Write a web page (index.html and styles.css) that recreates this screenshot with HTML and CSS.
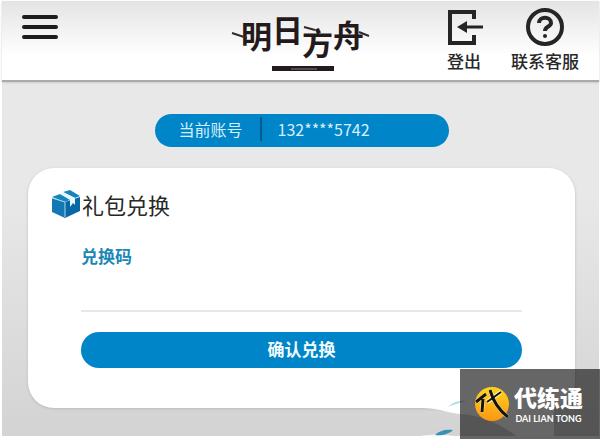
FILE: index.html
```html
<!DOCTYPE html>
<html lang="zh-CN">
<head>
<meta charset="utf-8">
<meta name="viewport" content="width=device-width, initial-scale=1">
<title>礼包兑换</title>
<link rel="stylesheet" href="styles.css">
</head>
<body>
<div class="page">
  <header class="topbar">
    <button class="menu" type="button" aria-label="菜单">
      <svg width="36" height="28" viewBox="0 0 36 28"><path d="M2 4H34M2 14H34M2 24H34" stroke="#1d1d1d" stroke-width="4" stroke-linecap="round"/></svg>
    </button>
    <a class="logo" href="#">
      <svg width="140" height="66" viewBox="0 0 140 66">
        <g class="logo-text">
          <text x="10" y="41">明</text>
          <text x="41" y="35">日</text>
          <text x="71" y="48">方</text>
          <text x="102" y="40">舟</text>
        </g>
        <path d="M1 26L16 31M73 20L84 23M128 25L138 29" stroke="#33292a" stroke-width="2"/>
        <path d="M41 59H103V64H41Z" fill="#241a1b"/>
        <path d="M60 62H86" stroke="#85797a"/>
      </svg>
    </a>
    <nav class="actions">
      <a class="action" href="#">
        <svg width="38" height="38" viewBox="0 0 38 38" fill="none" stroke="#252525"><path d="M29 12V5H5V36H29V28" stroke-width="4"/><path d="M18 20H38" stroke-width="3"/><path d="M12 20L22 14V26Z" fill="#252525" stroke="none"/></svg>
        <span>登出</span>
      </a>
      <a class="action" href="#">
        <svg width="38" height="38" viewBox="0 0 38 38" fill="none" stroke="#252525"><circle cx="19" cy="20" r="17" stroke-width="4"/><path d="M13 16C13 9 25 9 25 16C25 20 19 19 19 24" stroke-width="4"/><circle cx="19" cy="29" r="2" fill="#252525" stroke="none"/></svg>
        <span>联系客服</span>
      </a>
    </nav>
  </header>
  <main class="content">
    <div class="account"><span class="account-label">当前账号</span><span>132****5742</span></div>
    <form class="card">
      <h1 class="title">
        <svg width="28" height="28" viewBox="0 0 28 28"><path d="M0 8L13 12V28L0 22Z" fill="#1478b5"/><path d="M13 12L28 7V21L13 28Z" fill="#0868a5"/><path d="M0 7L8 4L20 9L13 12ZM11 2L18 0L28 6L23 8Z" fill="#1683bd"/><path d="M8 4L11 2L23 8V15L21 13L18 17V10Z" fill="#e7f6fc"/><path d="M0 8L13 12V27" fill="none" stroke="#a7d8ed"/></svg>
        <span>礼包兑换</span>
      </h1>
      <div class="field">
        <label for="code">兑换码</label>
        <input id="code" type="text">
      </div>
      <button class="submit" type="submit">确认兑换</button>
    </form>
  </main>
</div>
<svg class="scenery" width="180" height="40" viewBox="0 0 180 40" aria-hidden="true"><path d="M0 4H134V40H100C80 24 60 16 40 15C28 14 20 9 0 9Z" fill="#fff"/><path d="M0 37C12 35 22 35 34 37H0Z" fill="#f4f5f6"/><path d="M28 8C33 3 39 1 46 2C40 4 35 5 28 8Z" fill="#b5dce8"/><path d="M15 36C19 32 25 30 33 31C29 35 22 37 15 36Z" fill="#3492b4"/></svg>
<aside class="watermark">
  <svg width="36" height="36" viewBox="0 0 36 36"><defs><linearGradient id="sun" x2="0" y2="1"><stop stop-color="#ffd51d"/><stop offset="1" stop-color="#fb9613"/></linearGradient></defs><circle cx="18" cy="18" r="17" fill="url(#sun)"/><path d="M2 16L12 8M9 13L8 26M13 16L27 6M16 4C19 15 26 25 34 31" fill="none" stroke="#fff0b0" stroke-width="4"/><path d="M2 16L12 8M9 13L8 26M16 4C19 15 26 25 34 31" fill="none" stroke="#17140c" stroke-width="3"/><path d="M13 16L27 6" stroke="#17140c" stroke-width="2"/></svg>
  <div class="watermark-text"><strong>代练通</strong><span>DAI LIAN TONG</span></div>
</aside>
</body>
</html>
```
FILE: styles.css
```css
* { box-sizing: border-box; }
body {
  margin: 0;
  min-height: 100vh;
  display: flex;
  position: relative;
  overflow: hidden;
  background: #fff;
  color: #282828;
  font-family: "Noto Sans CJK SC", sans-serif;
}
svg { display: block; flex: none; overflow: visible; }
a { color: inherit; text-decoration: none; }
button { border: 0; padding: 0; font: inherit; cursor: pointer; }
.page {
  flex: 1;
  display: flex;
  flex-direction: column;
  margin: 1px 1px 3px 2px;
  background: linear-gradient(#e8e8e8 45%, #d3d3d3);
}
.topbar {
  display: grid;
  grid-template-columns: 1fr auto 1fr;
  align-items: start;
  height: 81px;
  padding: 6px 20px 0;
  background: linear-gradient(#e4e4e4, #fff 70%);
  border-bottom: 2px solid #aaa;
  box-shadow: 0 1px 2px #ccc;
}
.menu { justify-self: start; margin-top: 6px; background: none; }
.logo-text { font-size: 31px; font-weight: 700; fill: #241a1b; }
.actions { display: flex; justify-content: flex-end; gap: 28px; }
.action {
  display: flex;
  flex-direction: column;
  align-items: center;
  gap: 4px;
  font-size: 17px;
  line-height: 24px;
  font-weight: 500;
}
.content { padding: 32px 24px 28px 26px; }
.account {
  display: flex;
  align-items: center;
  width: 294px;
  height: 33px;
  margin: 0 auto 21px;
  padding: 0 24px 4px;
  border-radius: 17px;
  background: #0085c8;
  color: #d5f0fa;
  font-size: 16px;
}
.account-label { padding-right: 17px; margin-right: 16px; border-right: 2px solid #07588b; }
.card {
  padding: 20px 53px 40px;
  border-radius: 26px;
  background: #fff;
  box-shadow: 0 1px 3px #bbb;
}
.title {
  display: flex;
  align-items: center;
  gap: 2px;
  margin: 0 0 16px -29px;
  font-size: 22px;
  line-height: 32px;
  font-weight: 400;
}
.field { display: flex; flex-direction: column; margin-bottom: 20px; }
.field label { color: #1b87b8; font-size: 17px; line-height: 40px; font-weight: 700; }
.field input {
  width: 100%;
  height: 36px;
  border: 0;
  border-bottom: 2px solid #e8e8e8;
  outline: 0;
  background: transparent;
  font-size: 17px;
}
.submit {
  display: block;
  width: 100%;
  height: 36px;
  padding-bottom: 4px;
  border-radius: 18px;
  background: #0085c8;
  color: #f2fbff;
  font-size: 17px;
  font-weight: 700;
}
.scenery { position: absolute; right: 0; bottom: 0; }
.watermark {
  position: absolute;
  right: 0;
  bottom: 0;
  display: flex;
  align-items: center;
  gap: 4px;
  width: 140px;
  height: 70px;
  padding: 0 14px;
  background: rgba(0, 0, 0, .6);
  color: #fff;
}
.watermark-text { display: flex; flex-direction: column; align-items: center; gap: 2px; }
.watermark strong { font-size: 23px; line-height: 28px; font-weight: 900; }
.watermark span { font: 700 9px/12px Lato, sans-serif; white-space: nowrap; }
```
